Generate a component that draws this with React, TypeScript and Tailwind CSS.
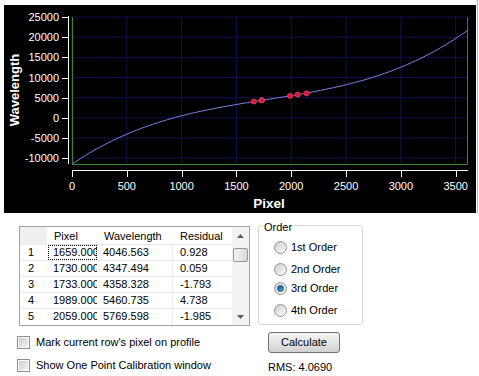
import { FC } from "react";

// Cubic calibration fit (wavelength as a function of pixel)
const fit = (p: number) => {
  const t = p / 1000;
  return -11500 + 12000 * t - 3500 * t * (t - 1) + 1510 * t * (t - 1) * (t - 2);
};
const sx = (p: number) => 72 + p * 0.109626;
const sy = (w: number) => 117.8 - w * 0.0040286;

const points = [
  { pixel: 1659, wl: 4046.563, res: "0.928" },
  { pixel: 1730, wl: 4347.494, res: "0.059" },
  { pixel: 1733, wl: 4358.328, res: "-1.793" },
  { pixel: 1989, wl: 5460.735, res: "4.738" },
  { pixel: 2059, wl: 5769.598, res: "-1.985" },
  { pixel: 2140, wl: 6070.2, res: "" },
];

const yTicks = [25000, 20000, 15000, 10000, 5000, 0, -5000, -10000];
const xTicks = [0, 500, 1000, 1500, 2000, 2500, 3000, 3500];

const Chart: FC = () => {
  const curve: string[] = [];
  for (let p = 0; p <= 3611; p += 15) curve.push(`${sx(p).toFixed(1)},${sy(fit(p)).toFixed(1)}`);
  curve.push(`${sx(3611).toFixed(1)},${sy(fit(3611)).toFixed(1)}`);

  return (
    <svg width={472} height={208} viewBox="4 5 472 208" className="block">
      {/* grid */}
      {yTicks.map((w) => (
        <line key={w} x1={72} x2={468} y1={sy(w)} y2={sy(w)} stroke="#11114d" strokeWidth={1} />
      ))}
      {xTicks.map((p) => (
        <line key={p} x1={sx(p)} x2={sx(p)} y1={17} y2={164} stroke="#11114d" strokeWidth={1} />
      ))}
      {/* plot frame */}
      <polyline points="72.5,17 72.5,164.5 467.5,164.5 467.5,17" fill="none" stroke="#2f8a2f" strokeWidth={1} />
      {/* y axis */}
      <line x1={68.5} x2={68.5} y1={16} y2={164} stroke="#ffffff" strokeWidth={1} />
      {yTicks.map((w) => (
        <g key={w}>
          <line x1={62} x2={69} y1={Math.round(sy(w)) + 0.5} y2={Math.round(sy(w)) + 0.5} stroke="#ffffff" />
          <text x={59} y={sy(w) + 4} textAnchor="end" fill="#ffffff" fontSize={11} fontFamily="Liberation Sans, Arial, sans-serif">
            {w}
          </text>
        </g>
      ))}
      {/* x axis */}
      <line x1={72} x2={468} y1={170.5} y2={170.5} stroke="#ffffff" strokeWidth={1} />
      {xTicks.map((p) => (
        <g key={p}>
          <line x1={Math.round(sx(p)) + 0.5} x2={Math.round(sx(p)) + 0.5} y1={170} y2={177} stroke="#ffffff" />
          <text x={sx(p)} y={190} textAnchor="middle" fill="#ffffff" fontSize={11} fontFamily="Liberation Sans, Arial, sans-serif">
            {p}
          </text>
        </g>
      ))}
      {/* fitted curve */}
      <polyline points={curve.join(" ")} fill="none" stroke="#8585ee" strokeWidth={1} />
      {/* calibration points */}
      {points.map((pt) => (
        <circle key={pt.pixel} cx={sx(pt.pixel)} cy={sy(pt.wl)} r={2.6} fill="#e3143a" stroke="#ff5a7a" strokeOpacity={0.5} strokeWidth={1} />
      ))}
      {/* axis titles */}
      <text x={14} y={90} transform="rotate(-90 14 90)" textAnchor="middle" dominantBaseline="central" fill="#ffffff" fontSize={13} fontWeight="bold" fontFamily="Liberation Sans, Arial, sans-serif">
        Wavelength
      </text>
      <text x={269} y={208} textAnchor="middle" fill="#ffffff" fontSize={13.5} fontWeight="bold" fontFamily="Liberation Sans, Arial, sans-serif">
        Pixel
      </text>
    </svg>
  );
};

const Checkbox: FC<{ label: string }> = ({ label }) => (
  <div className="flex items-center h-[13px] -ml-[2px]">
    <div className="w-[13px] h-[13px] border border-[#8e8f8f] bg-white p-[1px]">
      <div className="w-full h-full bg-gradient-to-br from-[#cdcdcd] to-[#f4f4f4]" />
    </div>
    <span className="ml-[6px] leading-[13px]">{label}</span>
  </div>
);

const Radio: FC<{ label: string; checked?: boolean; mt: string }> = ({ label, checked, mt }) => (
  <div className={`flex items-center h-[14px] ml-[15px] ${mt}`}>
    <div className="w-[13px] h-[13px] rounded-full border border-[#929292] bg-gradient-to-br from-[#cfcfcf] to-[#fbfbfb] flex items-center justify-center">
      {checked && <div className="w-[7px] h-[7px] rounded-full bg-gradient-to-br from-[#0d4c8c] to-[#55b6ee] border border-[#1c4f80]" />}
    </div>
    <span className="ml-[4px] leading-[14px]">{label}</span>
  </div>
);

const Arrow: FC<{ up?: boolean }> = ({ up }) => (
  <svg width={7} height={4} viewBox="0 0 7 4">
    <path d={up ? "M0 4 L3.5 0 L7 4 Z" : "M0 0 L3.5 4 L7 0 Z"} fill="#5f5f5f" />
  </svg>
);

export default function App() {
  return (
    <div className="w-[479px] h-[376px] bg-white overflow-hidden text-[11px] text-black font-['Liberation_Sans',Arial,sans-serif]">
      <div className="flex h-[213px]">
        <div className="ml-[4px] mt-[5px] w-[472px] h-[208px] bg-black">
          <Chart />
        </div>
        <div className="ml-[1px] w-[1px] bg-[#b4b4b4]" />
      </div>

      <div className="flex pl-[19px] pt-[13px]">
        <div className="w-[231px]">
          <div className="h-[100px] border border-[#a5a5a5] flex">
            <div className="w-[212px]">
              <div className="grid grid-cols-[27px_50px_76px_59px] h-[18px] leading-[18px] border-b border-[#e2e2e2]">
                <div className="bg-[#efefef]" />
                <div className="pl-[7px]">Pixel</div>
                <div className="pl-[7px]">Wavelength</div>
                <div className="pl-[7px]">Residual</div>
              </div>
              {points.slice(0, 5).map((pt, i) => (
                <div key={pt.pixel} className="grid grid-cols-[27px_50px_76px_59px] h-[16px] leading-[15px] border-b border-[#ececec] last:border-b-0">
                  <div className="pl-[8px]">{i + 1}</div>
                  <div className="pl-[1px] overflow-hidden whitespace-nowrap">
                    <div className={`pl-[5px] h-[15px] ${i === 0 ? "outline outline-1 outline-dotted outline-black -outline-offset-1" : ""}`}>
                      {pt.pixel.toFixed(3)}
                    </div>
                  </div>
                  <div className="pl-[6px] border-r border-[#ececec]">{pt.wl.toFixed(3)}</div>
                  <div className="pl-[7px]">{pt.res}</div>
                </div>
              ))}
            </div>
            <div className="w-[17px] bg-[#f3f3f3] flex flex-col items-center">
              <div className="h-[18px] flex items-center justify-center">
                <Arrow up />
              </div>
              <div className="mt-[3px] w-[15px] h-[14px] rounded-[2px] border border-[#979797] bg-gradient-to-r from-[#f4f4f4] to-[#d8d8d8]" />
              <div className="flex-1" />
              <div className="h-[16px] flex items-center justify-center">
                <Arrow />
              </div>
            </div>
          </div>
          <div className="mt-[10px]">
            <Checkbox label="Mark current row's pixel on profile" />
          </div>
          <div className="mt-[10px]">
            <Checkbox label="Show One Point Calibration window" />
          </div>
        </div>

        <div className="ml-[8px] -mt-[1px]">
          <div className="w-[105px] h-[100px] border border-[#d5d9dc] rounded-[3px]">
            <span className="block w-fit -mt-[6px] ml-[4px] px-[1px] bg-white leading-[14px]">Order</span>
            <Radio label="1st Order" mt="mt-[6px]" />
            <Radio label="2nd Order" mt="mt-[8px]" />
            <Radio label="3rd Order" checked mt="mt-[5px]" />
            <Radio label="4th Order" mt="mt-[8px]" />
          </div>
          <button className="mt-[7px] ml-[10px] w-[72px] h-[21px] rounded-[3px] border border-[#707070] bg-gradient-to-b from-[#f2f2f2] via-[#e6e6e6] to-[#d0d0d0] text-[11px] leading-[19px]">
            Calculate
          </button>
          <div className="mt-[7px] ml-[10px] leading-[14px]">RMS: 4.0690</div>
        </div>
      </div>
    </div>
  );
}
